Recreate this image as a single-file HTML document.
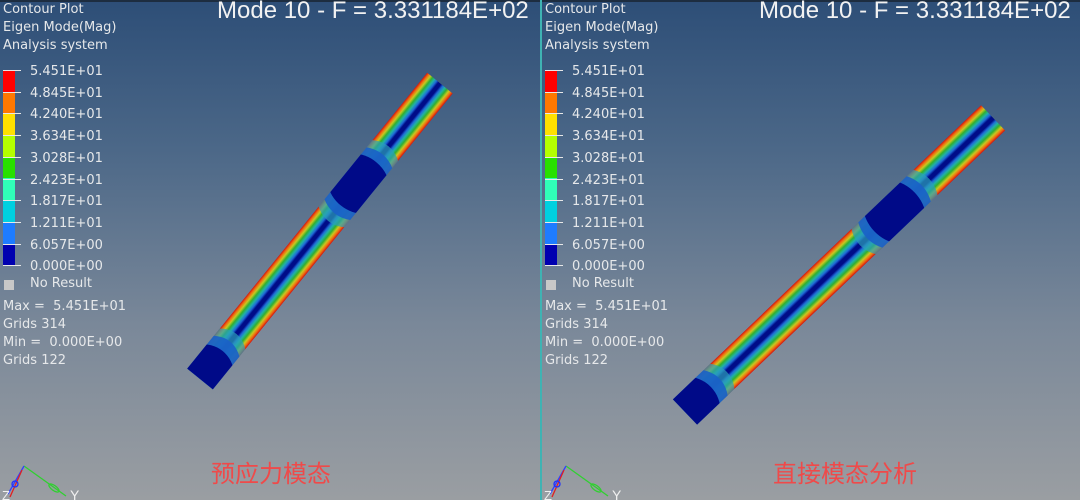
<!DOCTYPE html>
<html><head><meta charset="utf-8"><style>
*{margin:0;padding:0}
body{width:1080px;height:500px;overflow:hidden;background:#000;font-family:"DejaVu Sans","Liberation Sans",sans-serif}
.p{position:absolute;top:0;height:500px;overflow:hidden;background:linear-gradient(#2d4e77 0%,#4c6888 30%,#7a8899 65%,#9a9ea2 100%)}
.p::before{content:"";position:absolute;left:0;top:0;right:0;height:2px;background:#1d2d40}
.t{position:absolute;color:#e6e8ea;font-size:13px;line-height:18px;white-space:nowrap}
.title{position:absolute;left:217px;top:-3px;color:#f2f2f2;font-size:24px;white-space:nowrap;font-family:"Liberation Sans",sans-serif}
.bar{position:absolute;left:3px;top:70px;width:12px}
.bar div{height:21.7px}
.tick{position:absolute;left:3px;width:18px;height:1px;background:#e8e8e8}
.cn{position:absolute;color:#ef4a4a;font-size:24px;font-family:"Noto Sans CJK SC",sans-serif;white-space:nowrap}
</style></head><body>
<div class="p" style="left:0;width:540px" id="L"></div>
<div style="position:absolute;left:540px;top:0;width:2px;height:500px;background:#3fb3b3"></div>
<div class="p" style="left:542px;width:538px" id="R"></div>
<script>
function build(id,cn,cnx,beam){
var p=document.getElementById(id);
var h='<div class="t" style="left:3px;top:1px">Contour Plot</div><div class="t" style="left:3px;top:19px">Eigen Mode(Mag)</div><div class="t" style="left:3px;top:37px">Analysis system</div>';
h+='<div class="title">Mode 10 - F = 3.331184E+02</div>';
var cols=['#ff0000','#ff7800','#ffe000','#b4ff00','#28e000','#30ffb8','#00d0e0','#1e7cff','#0000b0'];
h+='<div class="bar">'+cols.map(function(c){return '<div style="background:'+c+'"></div>'}).join('')+'</div>';
var labs=['5.451E+01','4.845E+01','4.240E+01','3.634E+01','3.028E+01','2.423E+01','1.817E+01','1.211E+01','6.057E+00','0.000E+00'];
for(var i=0;i<10;i++){var y=70+i*21.7;h+='<div class="tick" style="top:'+y+'px"></div><div class="t" style="left:30px;top:'+(y-7)+'px">'+labs[i]+'</div>';}
h+='<div style="position:absolute;left:4px;top:280px;width:10px;height:10px;background:#c8c8c8"></div><div class="t" style="left:30px;top:275px">No Result</div>';
h+='<div class="t" style="left:3px;top:298px">Max =&nbsp; 5.451E+01</div><div class="t" style="left:3px;top:316px">Grids 314</div><div class="t" style="left:3px;top:334px">Min =&nbsp; 0.000E+00</div><div class="t" style="left:3px;top:352px">Grids 122</div>';
h+='<div class="cn" style="left:'+cnx+'px;top:454px">'+cn+'</div>';
var b=beam,L=b.L,W=b.W;
h+='<svg width="540" height="500" style="position:absolute;left:0;top:0"><defs><linearGradient id="g'+id+'" x1="0" y1="0" x2="0" y2="1"><stop offset="0" stop-color="#d01010"/><stop offset=".07" stop-color="#f07010"/><stop offset=".14" stop-color="#c8c820"/><stop offset=".22" stop-color="#30b030"/><stop offset=".3" stop-color="#20b0a8"/><stop offset=".38" stop-color="#1e6ad8"/><stop offset=".45" stop-color="#000c88"/><stop offset=".55" stop-color="#000c88"/><stop offset=".62" stop-color="#1e6ad8"/><stop offset=".7" stop-color="#20b0a8"/><stop offset=".78" stop-color="#30b030"/><stop offset=".86" stop-color="#c8c820"/><stop offset=".93" stop-color="#f07010"/><stop offset="1" stop-color="#d01010"/></linearGradient><clipPath id="c'+id+'"><rect x="0" y="'+(-W/2)+'" width="'+L+'" height="'+W+'"/></clipPath></defs>';
h+='<g transform="translate('+b.x+','+b.y+') rotate('+b.a+')"><g clip-path="url(#c'+id+')"><rect x="0" y="'+(-W/2)+'" width="'+L+'" height="'+W+'" fill="url(#g'+id+')"/>';
h+='<ellipse cx="0" cy="0" rx="58" ry="'+(W*1.1)+'" fill="#2ba0b8" opacity=".7"/><ellipse cx="0" cy="0" rx="48" ry="'+(W*1.05)+'" fill="#1a60c8" opacity=".9"/><ellipse cx="0" cy="0" rx="36" ry="'+(W*1.0)+'" fill="#000a88"/>';
var m=L*b.m;
h+='<ellipse cx="'+m+'" cy="0" rx="48" ry="'+(W*1.1)+'" fill="#2ba0b8" opacity=".7"/><ellipse cx="'+m+'" cy="0" rx="38" ry="'+(W*1.05)+'" fill="#1a60c8" opacity=".9"/><ellipse cx="'+m+'" cy="0" rx="28" ry="'+(W*1.0)+'" fill="#000a88"/>';
h+='</g></g>';
h+='<g stroke-width="1.3" fill="none"><line x1="24" y1="466" x2="66" y2="496" stroke="#30d030"/><ellipse cx="54" cy="488" rx="6" ry="2.5" transform="rotate(36 54 488)" stroke="#30d030"/><line x1="24" y1="466" x2="8" y2="494" stroke="#3040ff"/><line x1="22" y1="470" x2="10" y2="497" stroke="#e02020"/><circle cx="15" cy="484" r="3" stroke="#2030ff"/></g>';
h+='<text x="70" y="500" fill="#f0f0f0" font-size="14" font-family="Liberation Sans">Y</text><text x="2" y="500" fill="#f0f0f0" font-size="13" font-family="Liberation Sans">Z</text></svg>';
p.innerHTML=h;}
build('L','预应力模态',211,{x:200,y:379,a:-50.96,L:381,W:33,m:0.66});
build('R','直接模态分析',231,{x:143,y:412,a:-43.67,L:426,W:35,m:0.68});
</script>
</body></html>
